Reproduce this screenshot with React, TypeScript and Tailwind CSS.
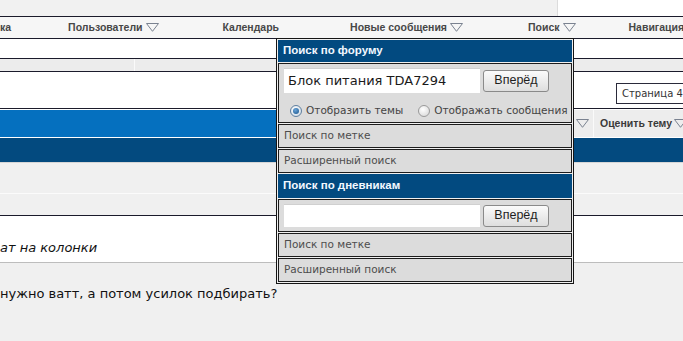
import React from 'react';

const Tri: React.FC<{ className?: string }> = ({ className }) => (
  <svg width="13" height="9" viewBox="0 0 13 9" className={`shrink-0 ${className ?? ''}`}>
    <polygon points="0.5,0.5 12.5,0.5 6.5,8.3" fill="none" stroke="#7a8290" strokeWidth="1" />
  </svg>
);

const Radio: React.FC<{ checked?: boolean }> = ({ checked }) =>
  checked ? (
    <span className="shrink-0 w-[12px] h-[12px] rounded-full border border-[#5f7f9f] bg-[radial-gradient(circle_at_40%_35%,#ffffff,#c9d6e2)] flex items-center justify-center">
      <span className="w-[6px] h-[6px] rounded-full bg-[radial-gradient(circle_at_40%_35%,#6aa4d8,#14528a)]" />
    </span>
  ) : (
    <span className="shrink-0 block w-[12px] h-[12px] rounded-full border border-[#9a9a9a] bg-[radial-gradient(circle_at_40%_35%,#ffffff,#d4d4d4)]" />
  );

const GoButton: React.FC = () => (
  <button className="shrink-0 w-[66px] h-[22px] ml-[3px] rounded-[3px] border border-[#8a8a8a] bg-gradient-to-b from-[#fbfbfb] to-[#dedede] text-[12.5px] text-[#1e1e1e] font-['Liberation_Sans',sans-serif] leading-none">
    Вперёд
  </button>
);

const LinkRow: React.FC<{ label: string }> = ({ label }) => (
  <div className="h-[24px] border border-[#1c1c1c] bg-[#dcdcdc] flex items-center pl-[5px] text-[10.5px] text-[#4d4d4d]">
    {label}
  </div>
);

const Header: React.FC<{ label: string; h: string }> = ({ label, h }) => (
  <div className={`${h} bg-[#024a80] flex items-center pl-[5px] text-[11.5px] font-bold text-[#f2f8ff] font-['Liberation_Sans',sans-serif]`}>
    {label}
  </div>
);

const SearchPopup: React.FC = () => (
  <div className="absolute left-[276px] top-[38px] w-[298px] h-[246px] border border-[#151515] bg-[#f0f0f0] p-px flex flex-col gap-px font-['DejaVu_Sans',sans-serif]">
    <Header label="Поиск по форуму" h="h-[22px]" />

    <div className="h-[60px] border border-[#1c1c1c] bg-[#dcdcdc] flex flex-col">
      <div className="mt-[4px] h-[25px] pl-[5px] flex items-center">
        <div className="shrink-0 w-[196px] h-[25px] bg-white border-t border-[#d0d0d0] flex items-center pl-[4px] text-[13px] text-[#1a1a1a]">
          Блок питания TDA7294
        </div>
        <GoButton />
      </div>
      <div className="mt-[8px] h-[20px] pl-[11px] flex items-center text-[10.5px] text-[#444] whitespace-nowrap">
        <Radio checked />
        <span className="ml-[4px]">Отобразить темы</span>
        <span className="ml-[15px]"><Radio /></span>
        <span className="ml-[4px]">Отображать сообщения</span>
      </div>
    </div>

    <LinkRow label="Поиск по метке" />
    <LinkRow label="Расширенный поиск" />

    <Header label="Поиск по дневникам" h="h-[24px]" />

    <div className="h-[33px] border border-[#1c1c1c] bg-[#dcdcdc] flex items-center pl-[5px]">
      <div className="shrink-0 w-[196px] h-[23px] bg-white border-t border-[#d0d0d0]" />
      <GoButton />
    </div>

    <LinkRow label="Поиск по метке" />
    <LinkRow label="Расширенный поиск" />
  </div>
);

export default function App() {
  return (
    <div className="relative w-[683px] h-[341px] overflow-hidden bg-[#f0f0f0] font-['DejaVu_Sans',sans-serif]">
      {/* top band */}
      <div className="h-[16px] flex">
        <div className="flex-1 bg-[#f1f1f1] border-r border-[#dcdcdc]" />
        <div className="w-[125px] bg-white" />
      </div>

      {/* navbar */}
      <div className="h-[23px] border-y border-[#1b1b2b] bg-[#f6f6f6] flex items-center text-[10.5px] font-bold text-[#474747] font-['Liberation_Sans',sans-serif] whitespace-nowrap">
        <span>ка</span>
        <span className="ml-[57px] flex items-center gap-[3px]">Пользователи <Tri /></span>
        <span className="ml-[64px]">Календарь</span>
        <span className="ml-[71px] flex items-center gap-[3px]">Новые сообщения <Tri /></span>
        <span className="ml-[65px] flex items-center gap-[3px]">Поиск <Tri /></span>
        <span className="ml-[53px]">Навигация</span>
      </div>

      <div className="h-[20px] bg-white border-b border-[#1b1b2b]" />

      <div className="h-[13px] flex bg-[#ececec] border-b border-[#1b1b2b]">
        <div className="w-[135px] border-r border-[#fafafa]" />
        <div className="flex-1" />
      </div>

      {/* pagination row */}
      <div className="h-[37px] bg-white border-b border-[#1b1b2b] flex justify-end items-start pt-[11px]">
        <div className="w-[67px] h-[21px] border border-[#2a2a3a] border-r-0 bg-white flex items-center pl-[5px] text-[10px] text-[#333] whitespace-nowrap overflow-hidden">
          Страница 4 из 5
        </div>
      </div>

      {/* thead bar */}
      <div className="h-[28px] bg-white pt-px flex">
        <div className="flex-1 bg-[#0570bf]" />
        <div className="shrink-0 w-[110px] bg-[#ededed] flex items-center whitespace-nowrap overflow-hidden">
          <Tri className="ml-[3px]" />
          <div className="shrink-0 ml-[4px] w-px h-full bg-[#fafafa]" />
          <span className="shrink-0 ml-[6px] flex items-center gap-[2px] text-[10.5px] font-bold text-[#3a3a3a] font-['Liberation_Sans',sans-serif]">
            Оценить тему <Tri />
          </span>
        </div>
      </div>
      <div className="h-px bg-white" />
      <div className="h-[24px] bg-[#034a7f]" />
      <div className="h-px bg-[#d6d6d6]" />

      <div className="h-[30px] bg-[#f0f0f0]" />
      <div className="h-px bg-[#fbfbfb]" />
      <div className="h-[22px] bg-[#f0f0f0] border-b border-[#1b1b2b]" />

      {/* post title */}
      <div className="h-[47px] bg-white border-b border-[#bdbdbd] pt-[24px] text-[13px] italic leading-[16px] text-[#111] whitespace-nowrap">
        ат на колонки
      </div>

      {/* post body */}
      <div className="pt-[23px] text-[13px] leading-[16px] text-[#111] whitespace-nowrap">
        нужно ватт, а потом усилок подбирать?
      </div>

      <SearchPopup />
    </div>
  );
}
